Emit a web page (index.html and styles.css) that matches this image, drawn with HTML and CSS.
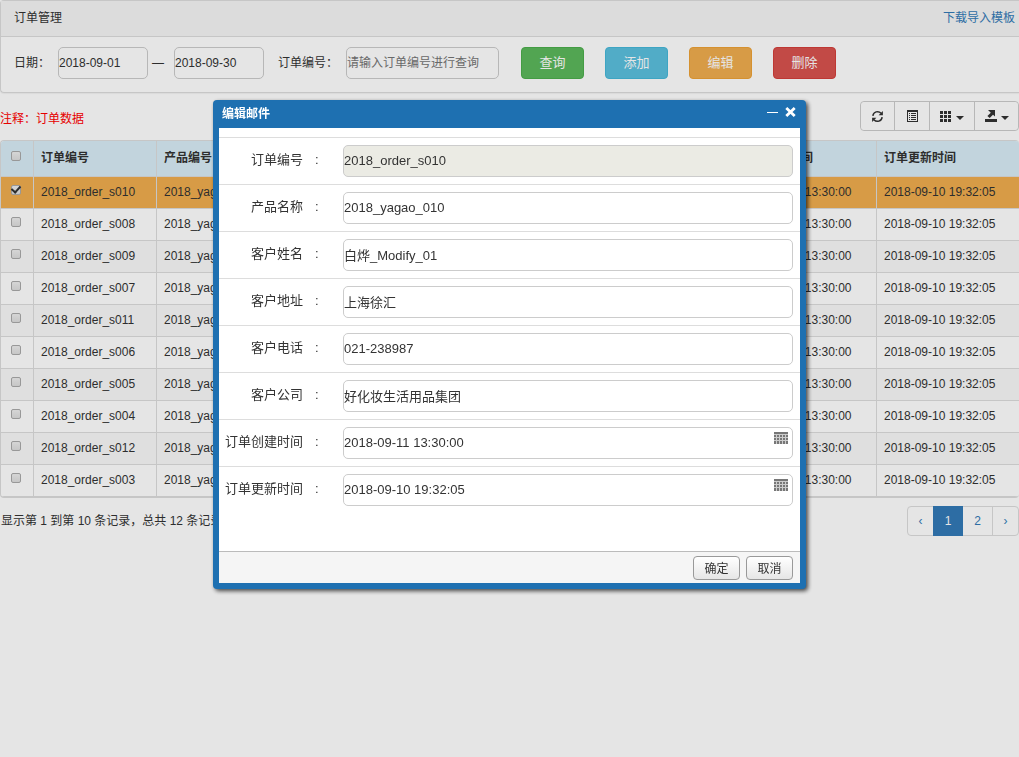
FILE: index.html
```
<!DOCTYPE html>
<html lang="zh-CN">
<head>
<meta charset="utf-8">
<title>订单管理</title>
<link rel="stylesheet" href="styles.css">
</head>
<body>
<main class="page">
  <section class="panel">
    <header class="panel-heading">
      <span>订单管理</span>
      <a class="template-link" href="#">下载导入模板</a>
    </header>
    <form class="filters">
      <label for="date-from">日期：</label>
      <input class="field field-date" id="date-from" type="text" value="2018-09-01">
      <span class="dash">—</span>
      <input class="field field-date" type="text" value="2018-09-30" aria-label="结束日期">
      <label class="order-label" for="order-no">订单编号：</label>
      <input class="field field-order" id="order-no" type="text" placeholder="请输入订单编号进行查询">
      <div class="actions">
        <button class="btn btn-success" type="button">查询</button>
        <button class="btn btn-info" type="button">添加</button>
        <button class="btn btn-warning" type="button">编辑</button>
        <button class="btn btn-danger" type="button">删除</button>
      </div>
    </form>
  </section>

  <div class="toolbar">
    <span class="note">注释：订单数据</span>
    <div class="tools">
      <button class="tool" type="button" aria-label="刷新">
        <svg width="13" height="13" viewBox="0 0 14 14" fill="none" stroke="currentColor" stroke-width="1.6"><path d="M2 6.3A5 5 0 0 1 10.8 3.6M12 7.7A5 5 0 0 1 3.2 10.4"/><path d="M12.8 1v4.6H8.2zM1.2 13V8.4h4.6z" fill="currentColor" stroke="none"/></svg>
      </button>
      <button class="tool" type="button" aria-label="切换视图">
        <svg width="11" height="12" viewBox="0 0 11 12" fill="currentColor"><path fill-rule="evenodd" d="M0 0h11v12H0zM1 2v9h9V2z"/><path d="M2 3h1v1H2zM4 3h5v1H4zM2 5h1v1H2zM4 5h5v1H4zM2 7h1v1H2zM4 7h5v1H4zM2 9h1v1H2zM4 9h5v1H4z"/></svg>
      </button>
      <button class="tool tool-wide" type="button" aria-label="列">
        <svg width="12" height="11" viewBox="0 0 12 11" fill="currentColor"><path d="M0 0h3v3H0zM4 0h3v3H4zM8 0h3v3H8zM0 4h3v3H0zM4 4h3v3H4zM8 4h3v3H8zM0 8h3v3H0zM4 8h3v3H4zM8 8h3v3H8z"/></svg>
        <span class="caret"></span>
      </button>
      <button class="tool tool-wide" type="button" aria-label="导出">
        <svg width="12" height="12" viewBox="0 0 12 12" fill="currentColor"><path d="M0 9h12v3H0zM3 0h7v6.5L8 4.7 4.7 8 2.4 6l3.4-3.2z"/></svg>
        <span class="caret"></span>
      </button>
    </div>
  </div>

  <div class="table-wrap">
    <table class="orders">
      <colgroup><col class="col-check"><col class="col-order"><col class="col-product"><col><col class="col-created"><col class="col-updated"></colgroup>
      <thead>
        <tr><th><input class="check" type="checkbox" aria-label="全选"></th><th>订单编号</th><th>产品编号</th><th></th><th>订单创建时间</th><th>订单更新时间</th></tr>
      </thead>
      <tbody>
        <tr class="selected"><td><input class="check" type="checkbox" aria-label="选择" checked></td><td>2018_order_s010</td><td>2018_yagao</td><td></td><td>2018-09-11 13:30:00</td><td>2018-09-10 19:32:05</td></tr>
        <tr><td><input class="check" type="checkbox" aria-label="选择"></td><td>2018_order_s008</td><td>2018_yagao</td><td></td><td>2018-09-11 13:30:00</td><td>2018-09-10 19:32:05</td></tr>
        <tr><td><input class="check" type="checkbox" aria-label="选择"></td><td>2018_order_s009</td><td>2018_yagao</td><td></td><td>2018-09-11 13:30:00</td><td>2018-09-10 19:32:05</td></tr>
        <tr><td><input class="check" type="checkbox" aria-label="选择"></td><td>2018_order_s007</td><td>2018_yagao</td><td></td><td>2018-09-11 13:30:00</td><td>2018-09-10 19:32:05</td></tr>
        <tr><td><input class="check" type="checkbox" aria-label="选择"></td><td>2018_order_s011</td><td>2018_yagao</td><td></td><td>2018-09-11 13:30:00</td><td>2018-09-10 19:32:05</td></tr>
        <tr><td><input class="check" type="checkbox" aria-label="选择"></td><td>2018_order_s006</td><td>2018_yagao</td><td></td><td>2018-09-11 13:30:00</td><td>2018-09-10 19:32:05</td></tr>
        <tr><td><input class="check" type="checkbox" aria-label="选择"></td><td>2018_order_s005</td><td>2018_yagao</td><td></td><td>2018-09-11 13:30:00</td><td>2018-09-10 19:32:05</td></tr>
        <tr><td><input class="check" type="checkbox" aria-label="选择"></td><td>2018_order_s004</td><td>2018_yagao</td><td></td><td>2018-09-11 13:30:00</td><td>2018-09-10 19:32:05</td></tr>
        <tr><td><input class="check" type="checkbox" aria-label="选择"></td><td>2018_order_s012</td><td>2018_yagao</td><td></td><td>2018-09-11 13:30:00</td><td>2018-09-10 19:32:05</td></tr>
        <tr><td><input class="check" type="checkbox" aria-label="选择"></td><td>2018_order_s003</td><td>2018_yagao</td><td></td><td>2018-09-11 13:30:00</td><td>2018-09-10 19:32:05</td></tr>
      </tbody>
    </table>
  </div>

  <footer class="table-footer">
    <span>显示第 1 到第 10 条记录，总共 12 条记录</span>
    <nav class="pagination" aria-label="分页">
      <a href="#">‹</a><a class="active" href="#">1</a><a href="#">2</a><a href="#">›</a>
    </nav>
  </footer>
</main>

<div class="overlay">
  <section class="dialog" role="dialog" aria-labelledby="dialog-title">
    <header class="dialog-header">
      <h2 id="dialog-title">编辑邮件</h2>
      <button class="window-btn" type="button" aria-label="最小化"><svg width="11" height="11" viewBox="0 0 11 11" fill="#fff"><path d="M0 5h11v1H0z"/></svg></button>
      <button class="window-btn" type="button" aria-label="关闭"><svg width="11" height="11" viewBox="0 0 11 11" stroke="#fff" stroke-width="2.8"><path d="M1.3 1l8.4 8M9.7 1L1.3 9"/></svg></button>
    </header>
    <form class="dialog-body">
      <div class="row"><label for="f1">订单编号</label><span class="colon">:</span><div class="control"><input class="field" id="f1" type="text" value="2018_order_s010" readonly></div></div>
      <div class="row"><label for="f2">产品名称</label><span class="colon">:</span><div class="control"><input class="field" id="f2" type="text" value="2018_yagao_010"></div></div>
      <div class="row"><label for="f3">客户姓名</label><span class="colon">:</span><div class="control"><input class="field" id="f3" type="text" value="白烨_Modify_01"></div></div>
      <div class="row"><label for="f4">客户地址</label><span class="colon">:</span><div class="control"><input class="field" id="f4" type="text" value="上海徐汇"></div></div>
      <div class="row"><label for="f5">客户电话</label><span class="colon">:</span><div class="control"><input class="field" id="f5" type="text" value="021-238987"></div></div>
      <div class="row"><label for="f6">客户公司</label><span class="colon">:</span><div class="control"><input class="field" id="f6" type="text" value="好化妆生活用品集团"></div></div>
      <div class="row"><label for="f7">订单创建时间</label><span class="colon">:</span><div class="control"><input class="field" id="f7" type="text" value="2018-09-11 13:30:00"><svg class="calendar" width="14" height="12" viewBox="0 0 14 12" fill="#777"><path fill="#ccc" d="M0 2h14v10H0z"/><path d="M0 0h14v2H0zM0 3h2v2H0zM3 3h2v2H3zM6 3h2v2H6zM9 3h2v2H9zM12 3h2v2h-2zM0 6h2v2H0zM3 6h2v2H3zM6 6h2v2H6zM9 6h2v2H9zM12 6h2v2h-2zM0 9h2v3H0zM3 9h2v3H3zM6 9h2v3H6zM9 9h2v3H9zM12 9h2v3h-2z"/></svg></div></div>
      <div class="row"><label for="f8">订单更新时间</label><span class="colon">:</span><div class="control"><input class="field" id="f8" type="text" value="2018-09-10 19:32:05"><svg class="calendar" width="14" height="12" viewBox="0 0 14 12" fill="#777"><path fill="#ccc" d="M0 2h14v10H0z"/><path d="M0 0h14v2H0zM0 3h2v2H0zM3 3h2v2H3zM6 3h2v2H6zM9 3h2v2H9zM12 3h2v2h-2zM0 6h2v2H0zM3 6h2v2H3zM6 6h2v2H6zM9 6h2v2H9zM12 6h2v2h-2zM0 9h2v3H0zM3 9h2v3H3zM6 9h2v3H6zM9 9h2v3H9zM12 9h2v3h-2z"/></svg></div></div>
    </form>
    <footer class="dialog-footer">
      <button class="dialog-btn" type="button">确定</button>
      <button class="dialog-btn" type="button">取消</button>
    </footer>
  </section>
</div>
</body>
</html>
```
FILE: styles.css
```
* {
  box-sizing: border-box;
}

body {
  margin: 0;
  background: #fff;
  color: #333;
  font: 12px/18px "Liberation Sans", "Noto Sans CJK SC", sans-serif;
  overflow-x: hidden;
}

input,
button {
  font-family: inherit;
  color: inherit;
}

a {
  color: #337ab7;
  text-decoration: none;
}

/* Search panel */
.panel {
  border: 1px solid #ddd;
  border-right: 0;
  border-radius: 4px 0 0 4px;
  box-shadow: 0 1px 1px rgba(0, 0, 0, 0.05);
}

.panel-heading {
  display: flex;
  justify-content: space-between;
  padding: 8px 4px 9px 13px;
  border-bottom: 1px solid #ddd;
  background: #f5f5f5;
}

.filters {
  display: flex;
  align-items: center;
  padding: 10px 13px 13px;
}

.filters label {
  width: 44px;
  white-space: nowrap;
}

.filters .order-label {
  width: 68px;
  margin-left: 14px;
}

.field {
  height: 32px;
  padding: 0;
  border: 1px solid #ccc;
  border-radius: 5px;
  background: #fff;
  font-size: 12px;
  outline: 0;
}

.field::placeholder {
  color: #757575;
}

.field-date {
  width: 90px;
}

.field-order {
  width: 153px;
}

.dash {
  width: 26px;
  padding-left: 4px;
}

.actions {
  display: flex;
  gap: 21px;
  margin-left: 22px;
}

.btn {
  width: 63px;
  height: 32px;
  padding: 0 0 4px;
  border: 1px solid;
  border-radius: 4px;
  color: #fff;
  font-size: 13px;
}

.btn-success {
  background: #5cb85c;
  border-color: #4cae4c;
}

.btn-info {
  background: #5bc0de;
  border-color: #46b8da;
}

.btn-warning {
  background: #f0ad4e;
  border-color: #eea236;
}

.btn-danger {
  background: #d9534f;
  border-color: #d43f3a;
}

/* Table toolbar */
.toolbar {
  display: flex;
  align-items: center;
  justify-content: space-between;
  padding: 8px 0 9px;
}

.note {
  padding-top: 5px;
  color: #f00;
}

.tools {
  display: flex;
  border: 1px solid #ccc;
  border-radius: 4px;
}

.tool {
  display: flex;
  align-items: center;
  justify-content: center;
  gap: 4px;
  width: 33px;
  height: 28px;
  padding: 0;
  border: 0;
  border-radius: 4px 0 0 4px;
  background: #fff;
}

.tool + .tool {
  width: 35px;
  border-left: 1px solid #ccc;
  border-radius: 0;
}

.tool + .tool-wide {
  width: 45px;
}

.tool + .tool-wide:last-child {
  width: 44px;
  border-radius: 0 4px 4px 0;
}

.caret {
  margin-top: 3px;
  border: 4px solid transparent;
  border-top-color: #333;
  border-bottom: 0;
}

/* Orders table */
.table-wrap {
  border: 1px solid #ddd;
  border-right: 0;
  border-radius: 4px;
  overflow: hidden;
}

.orders {
  width: 100%;
  border-spacing: 0;
  table-layout: fixed;
}

.col-check {
  width: 33px;
}

.col-order {
  width: 123px;
}

.col-product {
  width: 60px;
}

.col-created {
  width: 143px;
}

.col-updated {
  width: 142px;
}

.orders th,
.orders td {
  height: 32px;
  padding: 0 7px 2px;
  border-right: 1px solid #ddd;
  border-bottom: 1px solid #ddd;
  overflow: hidden;
  text-align: left;
  white-space: nowrap;
}

.orders th {
  height: 36px;
  background: #d9edf7;
}

.orders th:nth-child(3),
.orders td:nth-child(3) {
  padding-right: 0;
}

.orders th:last-child,
.orders td:last-child {
  border-right: 0;
}

.orders th:first-child,
.orders td:first-child {
  padding: 0 0 6px 10px;
  line-height: 10px;
}

.orders tbody tr:nth-child(odd) {
  background: #f9f9f9;
}

.orders tbody tr.selected {
  background: #f0ad4e;
}

.check {
  appearance: none;
  display: flex;
  align-items: center;
  justify-content: center;
  width: 10px;
  height: 10px;
  margin: 0;
  border: 1px solid #aaa;
  border-radius: 2px;
  background: linear-gradient(#eee, #ddd);
}

.check:checked::before {
  content: "";
  flex: none;
  width: 4px;
  height: 7px;
  margin-bottom: 2px;
  border: solid #333;
  border-width: 0 2px 2px 0;
  transform: rotate(42deg);
}

.table-footer {
  display: flex;
  align-items: center;
  justify-content: space-between;
  padding: 8px 0 0 1px;
}

.pagination {
  display: flex;
  height: 30px;
  border: 1px solid #ddd;
  border-radius: 4px;
}

.pagination a {
  width: 26px;
  line-height: 28px;
  text-align: center;
}

.pagination a:first-child {
  width: 25px;
}

.pagination a + a {
  border-left: 1px solid #ddd;
}

.pagination a:nth-child(3) {
  width: 29px;
}

.pagination a + .active {
  width: 30px;
  margin: -1px 0;
  border: 1px solid #337ab7;
  background: #337ab7;
  color: #fff;
}

.pagination .active + a {
  border-left: 0;
}

/* Modal dialog */
.overlay {
  position: fixed;
  inset: 0;
  display: flex;
  align-items: flex-start;
  justify-content: center;
  padding-top: 100px;
  background: rgba(0, 0, 0, 0.1);
}

.dialog {
  width: 593px;
  max-width: 100%;
  padding: 0 6px 6px;
  border-radius: 4px;
  background: #1e70b1;
  box-shadow: 2px 2px 4px rgba(0, 0, 0, 0.7);
}

.dialog-header {
  display: flex;
  align-items: center;
  gap: 7px;
  height: 28px;
  padding: 0 4px 4px 3px;
  color: #fff;
}

.dialog-header h2 {
  flex: 1;
  margin: 0;
  padding-top: 4px;
  font-size: 12px;
}

.window-btn {
  display: flex;
  padding: 0;
  border: 0;
  background: none;
}

.dialog-body {
  padding: 9px 0 38px;
  background: #fff;
}

.row {
  display: flex;
  padding: 7px 7px 7px 0;
  border-top: 1px solid #ddd;
  font-size: 13px;
}

.row label {
  width: 84px;
  padding-top: 6px;
  text-align: right;
}

.colon {
  width: 40px;
  padding: 6px 0 0 12px;
}

.control {
  position: relative;
  flex: 1;
}

.control .field {
  display: block;
  width: 100%;
  padding-bottom: 2px;
  font-size: 13px;
}

.control .field:read-only {
  background: #ebebe4;
}

.calendar {
  position: absolute;
  top: 5px;
  right: 5px;
}

.dialog-footer {
  display: flex;
  justify-content: flex-end;
  gap: 6px;
  padding: 4px 7px 3px;
  border-top: 1px solid #bbb;
  background: #f5f5f5;
}

.dialog-btn {
  width: 47px;
  height: 24px;
  padding: 0 0 2px;
  border: 1px solid #999;
  border-radius: 4px;
  background: linear-gradient(#fff, #e6e6e6);
  font-size: 12px;
}
```
